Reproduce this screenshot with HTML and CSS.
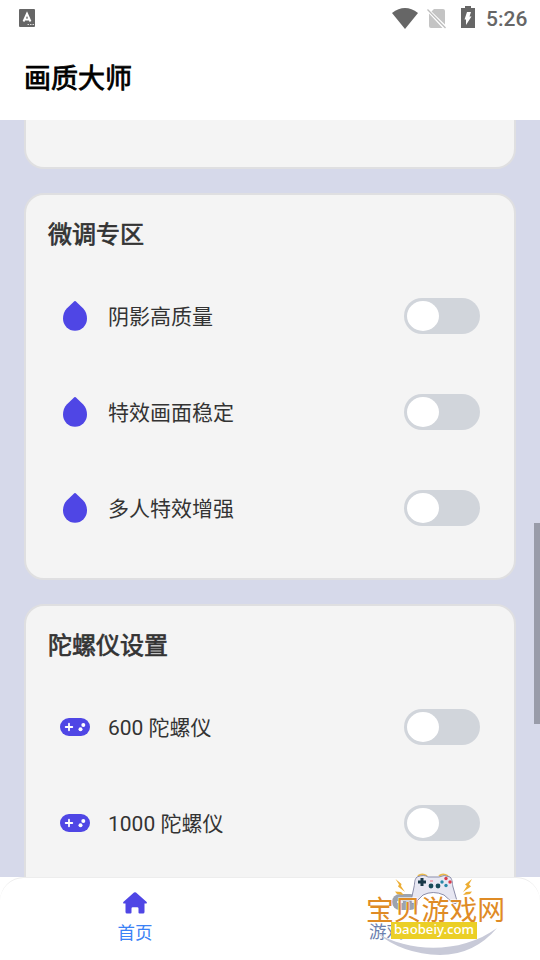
FILE: index.html
```html
<!DOCTYPE html>
<html lang="zh-CN">
<head>
<meta charset="utf-8">
<title>画质大师</title>
<link rel="stylesheet" href="styles.css">
</head>
<body>
<svg class="defs" width="0" height="0">
  <symbol id="drop" viewBox="0 0 24 30"><path d="M11.300.3q.7-.6 1.400 0L20 7.200C22.800 10 24 13.500 24 17.600a12 12.200 0 0 1-24 0C0 13.500 1.200 10 4 7.200z"/></symbol>
  <symbol id="pad" viewBox="0 0 30 18"><rect width="30" height="18" rx="9"/><path d="M9 5.700v6.600M5.700 9h6.600" stroke="#fff" stroke-width="1.800" stroke-linecap="round"/><circle cx="20.500" cy="11.300" r="2" fill="#fff"/><circle cx="23.300" cy="6.900" r="2" fill="#fff"/></symbol>
</svg>
<div class="status">
  <svg class="ime" width="16" height="18" viewBox="0 0 16 18"><rect width="16" height="18" rx="1" fill="#666"/><path d="M4.500 12.500L8 4.500l3.500 8M5.800 10.500h4.400" fill="none" stroke="#fff" stroke-width="1.900"/><path d="M8.500 15.500h1.500m1 0h1.500m1 0h1.500" stroke="#ddd" stroke-width="1.200"/></svg>
  <svg class="wifi" width="26" height="21" viewBox="0 0 26 21"><path d="M0 5Q13-5 26 5L13 21z" fill="#666"/></svg>
  <svg class="sim" width="20" height="21" viewBox="0 0 20 21"><path d="M7 1h9q2 0 2 2v13.500L4.500 3.500zM2 5.500L15.500 20H4q-2 0-2-2z" fill="#c4c4c4"/><path d="M.5 1.500l18 18.500" stroke="#bdbdbd" stroke-width="1.300"/></svg>
  <svg class="battery" width="14" height="22" viewBox="0 0 14 22"><path d="M4 0h6v2h4v20H0V2h4z" fill="#666"/><path d="M6 6h4L8.500 10.500H10.500L5 19V13.500H3.500z" fill="#fff"/></svg>
  <span class="clock">5:26</span>
</div>
<header class="header"><h1>画质大师</h1></header>
<main class="content">
  <section class="card tail"></section>
  <section class="card">
    <h2>微调专区</h2>
    <div class="row"><svg class="icon drop"><use href="#drop"/></svg><span>阴影高质量</span><i class="switch"></i></div>
    <div class="row"><svg class="icon drop"><use href="#drop"/></svg><span>特效画面稳定</span><i class="switch"></i></div>
    <div class="row"><svg class="icon drop"><use href="#drop"/></svg><span>多人特效增强</span><i class="switch"></i></div>
  </section>
  <section class="card">
    <h2>陀螺仪设置</h2>
    <div class="row"><svg class="icon pad"><use href="#pad"/></svg><span>600 陀螺仪</span><i class="switch"></i></div>
    <div class="row"><svg class="icon pad"><use href="#pad"/></svg><span>1000 陀螺仪</span><i class="switch"></i></div>
  </section>
  <div class="scrollbar"></div>
</main>
<nav class="tabs">
  <div class="tab active">
    <svg width="26" height="24" viewBox="0 0 26 24"><path d="M12 1.600q1-.9 2 0L24.700 11q.9 1.600-.7 1.600h-1.500v8.400q0 1.500-1.500 1.500h-3.500q-1 0-1-1V17.500q0-1.300-1.300-1.300h-4.400q-1.300 0-1.300 1.300v4q0 1-1 1H5q-1.500 0-1.500-1.500v-8.400H2Q.4 12.600 1.300 11z" fill="#4f46e5"/></svg>
    <span>首页</span>
  </div>
  <div class="tab">
    <svg width="26" height="24" viewBox="0 0 26 24"><rect x="0" y="3" width="26" height="16" rx="8" fill="#9ca3af"/><path d="M8 8v6M5 11h6" stroke="#fff" stroke-width="1.600"/></svg>
    <span class="game-label">游戏</span>
  </div>
  <div class="watermark">
    <svg width="150" height="86" viewBox="0 0 150 86">
      <path d="M17 60C48 79 100 82 137 55Q114 82 80 82Q42 81 17 60z" fill="#c8cad8"/>
      <g fill="#edae35"><path d="M35.500 6l6 5-.5 2 4 6-7-5.500 1-2zM35 18.500l6 .5 3 3-7-1zM112 6l-7 5.500 2 1.500-4 6 8-5.500-2-2zM112 18.500l-6 .5-3 3 7-1z"/></g>
      <path d="M58 3q4-3 9 0M79 3q4-3 9 0" fill="none" stroke="#eab94a" stroke-width="2"/>
      <path d="M57 4Q64 1 68 4h11Q84 1 90 4c3 3 2 7 3 10l4 14q0 4-4 2l-9-8q-11-5-21 0l-8 8q-4 2-4-2l3-14c1-4 0-7 3-10z" fill="#e7e7f2" stroke="#8c8eaa"/>
      <path d="M62 5v8M58 9h8" stroke="#173747" stroke-width="3"/>
      <g fill="#174a58"><circle cx="71" cy="13" r="2.400"/><circle cx="78" cy="13" r="2.400"/></g>
      <path d="M70 8h3" stroke="#edabb8" stroke-width="2"/>
      <g fill="#d83b4b"><circle cx="86" cy="5.500" r="1.700"/><circle cx="90" cy="9" r="1.700"/></g><g fill="#2788a8"><circle cx="82" cy="9" r="1.700"/><circle cx="86" cy="12.500" r="1.700"/></g>
    </svg>
    <span class="brand">宝贝游戏网</span><span class="url">baobeiy.com</span>
  </div>
</nav>
</body>
</html>
```

FILE: styles.css
```css
* { box-sizing: border-box; }
body { margin: 0; width: 540px; height: 960px; overflow: hidden; display: flex; flex-direction: column; background: #fff; font-family: Roboto, "Noto Sans CJK SC", sans-serif; color: #333; }
.defs { position: absolute; }
.status { height: 36px; display: flex; align-items: center; padding: 0 12px 0 19px; }
.wifi { margin-left: auto; margin-right: 9px; }
.sim { margin-right: 14px; }
.battery { margin-right: 11px; margin-bottom: 2px; }
.clock { font-size: 21px; font-weight: 500; color: #666; width: 42px; white-space: nowrap; padding-top: 1px; }
.header { height: 84px; display: flex; align-items: center; padding: 0 24px 4px; }
h1, h2 { margin: 0; font-weight: 400; }
h1 { font-size: 27px; color: #000; -webkit-text-stroke: .8px #000; }
.content { height: 757px; flex: none; background: #d6d9ea; overflow: hidden; padding: 0 24px; position: relative; }
.card { background: #f4f4f4; border: 2px solid #dfdfe1; border-radius: 20px; margin-bottom: 24px; height: 387px; padding: 22px; }
.card.tail { height: 49px; border-top: 0; border-radius: 0 0 20px 20px; }
h2 { font-size: 24px; line-height: 36px; -webkit-text-stroke: .7px #333; margin-bottom: 15px; }
.row { height: 96px; display: flex; align-items: center; padding: 0 12px; }
.row span { margin-left: 18px; font-size: 21px; padding-bottom: 2px; }
.icon { width: 30px; height: 30px; fill: #4f46e5; }
.icon.pad { height: 18px; }
.switch { width: 76px; height: 36px; border-radius: 18px; background: #d1d5db; margin-left: auto; padding: 3px; }
.switch::before { content: ""; display: block; width: 32px; height: 30px; border-radius: 50%; background: #fff; }
.scrollbar { position: absolute; right: 0; top: 403px; width: 6px; height: 201px; background: #999ca9; }
.tabs { height: 83px; flex: none; background: #fff; border-top: 1px solid #ededed; border-radius: 24px 24px 0 0; display: flex; position: relative; }
.tab { flex: 1; display: flex; flex-direction: column; align-items: center; padding-top: 13px; font-size: 17.5px; line-height: 26px; color: #6b7fae; }
.tab span { margin-top: 5px; }
.tab.active { color: #3b82f6; }
.tab .game-label { width: 72px; margin-top: 4px; }
.watermark { position: absolute; left: 360px; top: -5px; width: 150px; height: 86px; }
.watermark svg { position: absolute; inset: 0; }
.brand { position: absolute; left: 6px; top: 18px; font-size: 27.8px; line-height: 40px; color: #df8b25; white-space: nowrap; paint-order: stroke; -webkit-text-stroke: 1px #fff; }
.url { position: absolute; left: 31px; top: 49px; width: 86px; height: 17px; background: #ebcf26; color: #fff; font: 500 13.2px/15px "Noto Sans", sans-serif; text-align: center; }
```
